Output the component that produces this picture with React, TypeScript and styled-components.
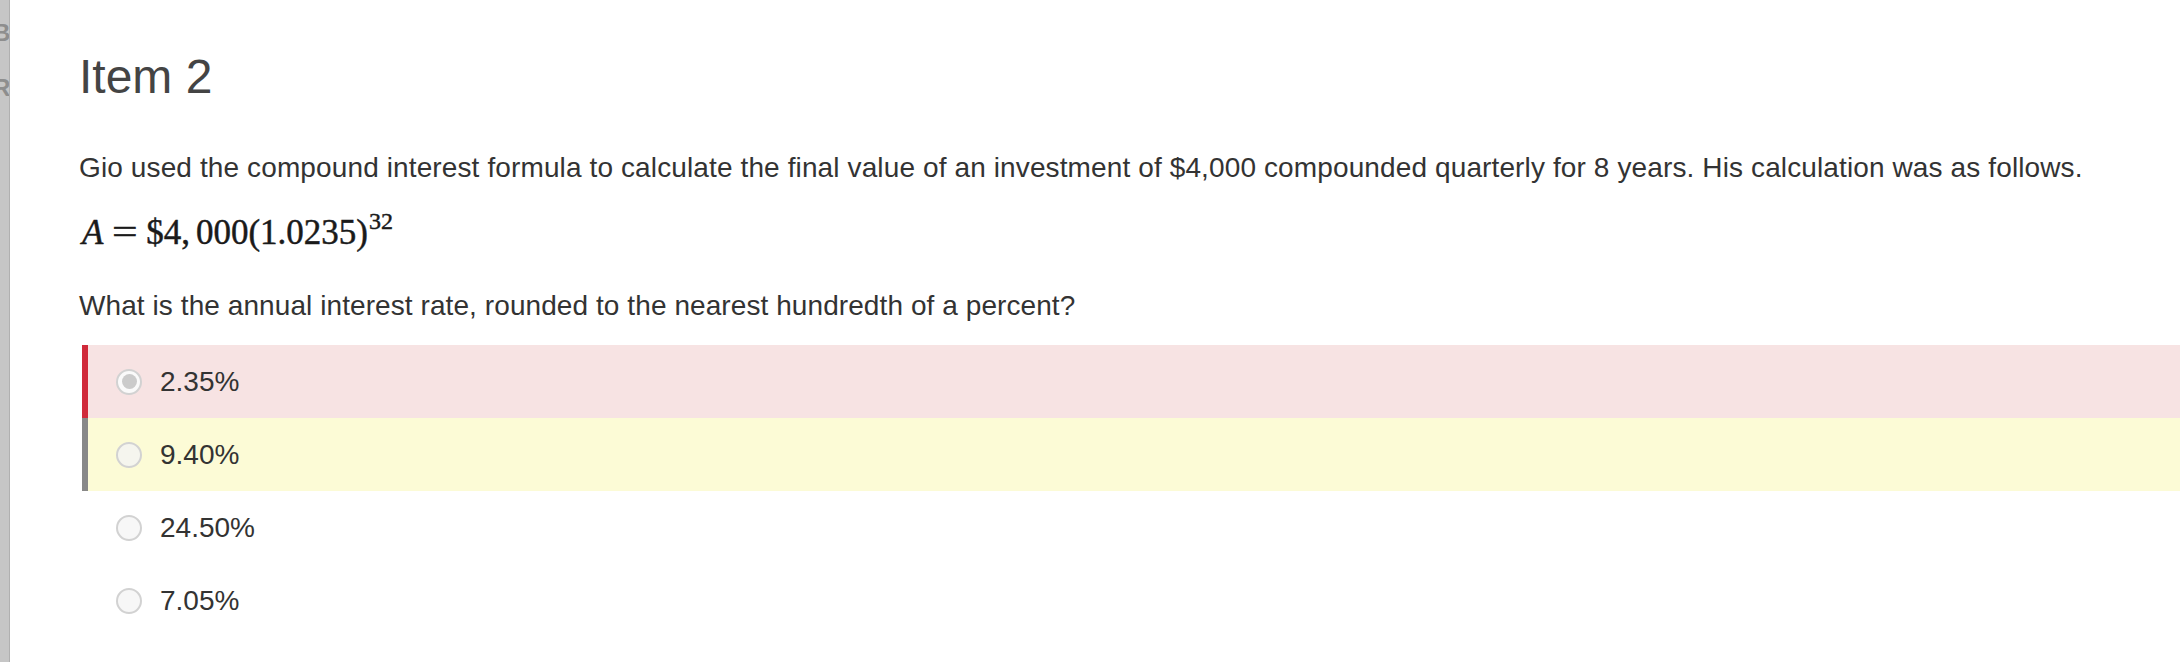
import styled, { createGlobalStyle } from 'styled-components'

const GlobalStyle = createGlobalStyle`
  html, body {
    margin: 0;
    padding: 0;
    background: #ffffff;
  }
  body {
    font-family: "Liberation Sans", Arial, Helvetica, sans-serif;
    color: #333333;
  }
`

interface iChoice {
  label: string
  state?: 'wrong' | 'answer' | 'none'
  checked?: boolean
}

const choices: iChoice[] = [
  { label: '2.35%', state: 'wrong', checked: true },
  { label: '9.40%', state: 'answer' },
  { label: '24.50%' },
  { label: '7.05%' },
]

const rowColors = {
  wrong: { bg: '#f7e3e3', bar: '#d02a3a', dot: '#f5f3f0' },
  answer: { bg: '#fcfbd6', bar: '#888888', dot: '#f5f5ee' },
  none: { bg: 'transparent', bar: 'transparent', dot: '#f7f7f7' },
}

const App = () => {
  return (
    <Page>
      <GlobalStyle />
      <Sidebar>
        <SideLetters>
          <span>B</span>
          <span>R</span>
        </SideLetters>
      </Sidebar>
      <Main>
        <Title>Item 2</Title>
        <Para>
          Gio used the compound interest formula to calculate the final value of an investment of
          $4,000 compounded quarterly for 8 years. His calculation was as follows.
        </Para>
        <MathLine>
          <Var>A</Var>
          <Rel>=</Rel>
          <span>$4,</span>
          <Thin />
          <span>000(1.0235)</span>
          <Sup>32</Sup>
        </MathLine>
        <Question>What is the annual interest rate, rounded to the nearest hundredth of a percent?</Question>
        <Choices>
          {choices.map((c) => {
            const col = rowColors[c.state || 'none']
            return (
              <Choice key={c.label} bg={col.bg} bar={col.bar}>
                <Radio fill={col.dot} checked={c.checked}>
                  {c.checked ? <Dot /> : null}
                </Radio>
                <Label>{c.label}</Label>
              </Choice>
            )
          })}
        </Choices>
      </Main>
    </Page>
  )
}

export default App

const Page = styled.div`
  display: flex;
  width: 2180px;
  height: 662px;
  overflow: hidden;
  background: #ffffff;
`

const Sidebar = styled.div`
  width: 9px;
  flex-shrink: 0;
  background: #c6c6c6;
  border-right: 1px solid #b0b0b0;
  overflow: hidden;
`

const SideLetters = styled.div`
  display: flex;
  flex-direction: column;
  margin-left: -7px;
  padding-top: 5px;
  font-size: 24px;
  line-height: 55px;
  font-weight: 700;
  color: #8e8e8e;
`

const Main = styled.div`
  flex: 1;
  display: flex;
  flex-direction: column;
  padding-top: 49px;
  padding-left: 69px;
  min-width: 0;
`

const Title = styled.h1`
  margin: 0;
  font-size: 48px;
  line-height: 56px;
  font-weight: 400;
  color: #444444;
`

const Para = styled.p`
  margin: 43px 0 0;
  font-size: 28px;
  line-height: 40px;
  letter-spacing: 0.12px;
  color: #333333;
  white-space: nowrap;
`

const MathLine = styled.div`
  margin-top: 21px;
  font-family: "Liberation Serif", "Times New Roman", serif;
  font-size: 35px;
  line-height: 48px;
  color: #1a1a1a;
  -webkit-text-stroke: 0.45px #1a1a1a;
  display: flex;
  align-items: baseline;
  padding-left: 3px;
`

const Var = styled.i`
  font-style: italic;
  margin-right: 12px;
`

const Rel = styled.span`
  margin-right: 11px;
  transform: scaleX(1.3);
`

const Thin = styled.span`
  width: 6px;
`

const Sup = styled.sup`
  font-size: 24px;
  line-height: 0;
  position: relative;
  top: -15px;
  margin-left: 1px;
`

const Question = styled.p`
  margin: 29px 0 0;
  font-size: 28px;
  line-height: 40px;
  letter-spacing: 0.08px;
  color: #333333;
`

const Choices = styled.div`
  margin-top: 19px;
  margin-left: 3px;
  display: flex;
  flex-direction: column;
`

const Choice = styled.div<{ bg: string; bar: string }>`
  height: 73px;
  display: flex;
  align-items: center;
  gap: 18px;
  padding-left: 28px;
  background: ${({ bg }) => bg};
  border-left: 6px solid ${({ bar }) => bar};
`

const Radio = styled.span<{ fill: string; checked?: boolean }>`
  width: 26px;
  height: 26px;
  box-sizing: border-box;
  border-radius: 50%;
  border: 2px solid #d2d2d2;
  background: ${({ fill, checked }) => (checked ? '#fafafa' : fill)};
  display: flex;
  align-items: center;
  justify-content: center;
  flex-shrink: 0;
`

const Dot = styled.span`
  width: 15px;
  height: 15px;
  border-radius: 50%;
  background: #cbcbcb;
`

const Label = styled.span`
  font-size: 28px;
  line-height: 40px;
  color: #333333;
`
